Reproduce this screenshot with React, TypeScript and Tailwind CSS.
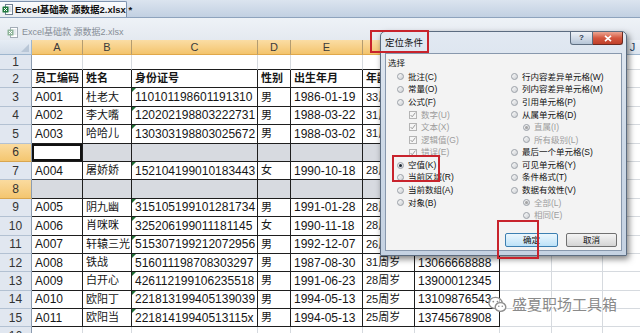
import React from 'react';

type Col = { id: string; w: string; table: boolean };

const COLS: Col[] = [
  { id: 'A', w: 'w-[51px]', table: true },
  { id: 'B', w: 'w-[49px]', table: true },
  { id: 'C', w: 'w-[126px]', table: true },
  { id: 'D', w: 'w-[33px]', table: true },
  { id: 'E', w: 'w-[72px]', table: true },
  { id: 'F', w: 'w-[52px]', table: true },
  { id: 'G', w: 'w-[85px]', table: true },
  { id: 'H', w: 'w-[52px]', table: false },
  { id: 'I', w: 'w-[51px]', table: false },
  { id: 'J', w: 'w-[60px]', table: false },
];

const DATA: (string[] | null)[] = [
  ['员工编码', '姓名', '身份证号', '性别', '出生年月', '年龄', '联系电话'],
  ['A001', '杜老大', '110101198601191310', '男', '1986-01-19', '33周岁', '13811112222'],
  ['A002', '李大嘴', '120202198803222731', '男', '1988-03-22', '31周岁', '13822223333'],
  ['A003', '哈哈儿', '130303198803025672', '男', '1988-03-02', '31周岁', '13833334444'],
  null,
  ['A004', '屠娇娇', '152104199010183443', '女', '1990-10-18', '28周岁', '13844445555'],
  null,
  ['A005', '阴九幽', '315105199101281734', '男', '1991-01-28', '28周岁', '13855556666'],
  ['A006', '肖咪咪', '325206199011181145', '女', '1990-11-18', '28周岁', '13866667777'],
  ['A007', '轩辕三光', '515307199212072956', '男', '1992-12-07', '26周岁', '13877778888'],
  ['A008', '铁战', '516011198708303297', '男', '1987-08-30', '31周岁', '13066668888'],
  ['A009', '白开心', '426112199106235518', '男', '1991-06-23', '28周岁', '13900012345'],
  ['A010', '欧阳丁', '221813199405139039', '男', '1994-05-13', '25周岁', '13109876543'],
  ['A011', '欧阳当', '22181419940513115x', '男', '1994-05-13', '25周岁', '13745678908'],
];

const CJK = /[\u4e00-\u9fff]/;

function ExcelIcon({ dim }: { dim?: boolean }) {
  return (
    <svg width="11" height="11" viewBox="0 0 11 11" className="shrink-0">
      <rect x="3.5" y="0.5" width="7" height="10" fill="#fff" stroke={dim ? '#a3acb6' : '#6f7f90'} />
      <path d="M5.5 3h4M5.5 5h4M5.5 7h4" stroke={dim ? '#c2ccd6' : '#93a7bb'} strokeWidth="0.8" />
      <rect x="0.5" y="2.5" width="6" height="6" rx="0.6" fill={dim ? '#8fb59a' : '#1f7a3d'} />
      <path d="M2 4l3 3M5 4l-3 3" stroke="#fff" strokeWidth="1" />
    </svg>
  );
}

function cellCls(col: Col, kind: string) {
  const base =
    'relative shrink-0 h-full border-r border-b flex items-center px-[3px] overflow-hidden whitespace-nowrap leading-none text-[#161616]';
  if (!col.table) return `${base} ${col.w} border-[#d6dadf]`;
  if (kind === 'top') return `${base} ${col.w} border-r-[#d6dadf] border-b-[#1e1e1e]`;
  if (kind === 'empty') return `${base} ${col.w} border-[#d6dadf]`;
  if (kind === 'blank') return `${base} ${col.w} border-[#1e1e1e] bg-[#d7dae0]`;
  return `${base} ${col.w} border-[#1e1e1e]`;
}

function SheetRow({
  n,
  kind,
  cells,
  bold,
  activeFirst,
  tall,
}: {
  n: number;
  kind: string;
  cells?: string[];
  bold?: boolean;
  activeFirst?: boolean;
  tall: boolean;
}) {
  const sel = kind === 'blank';
  return (
    <div className={tall ? 'flex h-[18.4px] shrink-0' : 'flex h-[15px] shrink-0'}>
      <div
        className={
          sel
            ? 'w-[32px] shrink-0 h-full border-r border-b border-r-[#8c9cb0] border-b-[#d9a64f] bg-linear-to-b from-[#fadb9f] to-[#f4c66f] flex items-center justify-center text-[12px] text-[#333] leading-none'
            : 'w-[32px] shrink-0 h-full border-r border-b border-r-[#8c9cb0] border-b-[#b3c1d2] bg-[#e1e7f0] flex items-center justify-center text-[12px] text-[#333] leading-none'
        }
      >
        {n}
      </div>
      {COLS.map((c, i) => {
        const t = cells && cells[i] ? cells[i] : '';
        const size = CJK.test(t) ? 'text-[11px]' : 'text-[12px]';
        const isActive = activeFirst && i === 0;
        return (
          <div
            key={c.id}
            className={
              cellCls(c, kind) +
              (isActive ? ' !bg-white shadow-[inset_0_0_0_2px_#111]' : '')
            }
          >
            {kind === 'data' && c.id === 'C' && !bold && (
              <span className="absolute left-0 top-0 w-0 h-0 border-t-[4px] border-r-[4px] border-t-[#1f6e34] border-r-transparent" />
            )}
            {t && <span className={`${size} ${bold ? 'font-bold' : ''}`}>{t}</span>}
          </div>
        );
      })}
    </div>
  );
}

function Radio({ on, disabled }: { on?: boolean; disabled?: boolean }) {
  return (
    <span className="w-[7px] h-[7px] shrink-0 rounded-full border border-[#9aa0a7] bg-linear-to-br from-[#fbfbfb] to-[#cdd0d4] flex items-center justify-center">
      {on && (
        <span
          className={
            disabled
              ? 'w-[3px] h-[3px] rounded-full bg-[#a3a3a3]'
              : 'w-[3px] h-[3px] rounded-full bg-[#1d2733]'
          }
        />
      )}
    </span>
  );
}

function Check() {
  return (
    <span className="w-[8px] h-[8px] shrink-0 border border-[#b4b4b4] bg-[#f5f5f5] flex items-center justify-center">
      <svg width="6" height="6" viewBox="0 0 6 6">
        <path d="M0.6 3l1.6 1.8 3.2-4.2" fill="none" stroke="#9c9c9c" strokeWidth="1" />
      </svg>
    </span>
  );
}

type It = { t: 'r' | 'c' | 's'; label: string; on?: boolean; dis?: boolean };

const LEFT: It[] = [
  { t: 'r', label: '批注(C)' },
  { t: 'r', label: '常量(O)' },
  { t: 'r', label: '公式(F)' },
  { t: 'c', label: '数字(U)', dis: true },
  { t: 'c', label: '文本(X)', dis: true },
  { t: 'c', label: '逻辑值(G)', dis: true },
  { t: 'c', label: '错误(E)', dis: true },
  { t: 'r', label: '空值(K)', on: true },
  { t: 'r', label: '当前区域(R)' },
  { t: 'r', label: '当前数组(A)' },
  { t: 'r', label: '对象(B)' },
];

const RIGHT: It[] = [
  { t: 'r', label: '行内容差异单元格(W)' },
  { t: 'r', label: '列内容差异单元格(M)' },
  { t: 'r', label: '引用单元格(P)' },
  { t: 'r', label: '从属单元格(D)' },
  { t: 's', label: '直属(I)', on: true, dis: true },
  { t: 's', label: '所有级别(L)', dis: true },
  { t: 'r', label: '最后一个单元格(S)' },
  { t: 'r', label: '可见单元格(Y)' },
  { t: 'r', label: '条件格式(T)' },
  { t: 'r', label: '数据有效性(V)' },
  { t: 's', label: '全部(L)', on: true, dis: true },
  { t: 's', label: '相同(E)', dis: true },
];

function Item({ it }: { it: It }) {
  const indent = it.t === 'r' ? '' : ' pl-[12px]';
  return (
    <div className={'flex items-center h-[12.6px] gap-[4.5px]' + indent}>
      {it.t === 'c' ? <Check /> : <Radio on={it.on} disabled={it.dis} />}
      <span
        className={
          it.dis
            ? 'text-[8.5px] leading-none text-[#9d9d9d] whitespace-nowrap'
            : 'text-[8.5px] leading-none text-[#111] whitespace-nowrap'
        }
      >
        {it.label}
      </span>
    </div>
  );
}

function Dialog() {
  return (
    <div className="absolute left-[380px] top-[31px] w-[247px] h-[225px] rounded-t-[5px] border border-[#5c6c80] bg-linear-to-b from-[#e2e9f2] via-[#cdd9e7] to-[#c5d2e2] shadow-[2px_3px_6px_rgba(0,0,0,0.5)] flex flex-col">
      <div className="h-[21px] shrink-0 flex items-start">
        <span className="ml-[4px] mt-[6px] text-[9.5px] leading-none text-[#111]">定位条件</span>
        <div className="ml-auto mr-[3px] flex">
          <div className="w-[23px] h-[13px] rounded-bl-[3px] border border-t-0 border-[#5d6d80] bg-linear-to-b from-[#eef2f7] to-[#b6c5d7] flex items-center justify-center text-[8px] leading-none font-bold text-[#2b3a4c]">
            ?
          </div>
          <div className="w-[30px] h-[13px] rounded-br-[3px] border border-l-0 border-t-0 border-[#6b2a20] bg-linear-to-b from-[#eba592] via-[#d4573f] to-[#c0402a] flex items-center justify-center">
            <svg width="8" height="7" viewBox="0 0 8 7">
              <path d="M1 0.8l6 5.4M7 0.8l-6 5.4" stroke="#fff" strokeWidth="1.6" />
            </svg>
          </div>
        </div>
      </div>
      <div className="flex-1 mx-[4px] mb-[4px] border border-[#8898ad] bg-[#f3f3f3] pl-[2px] pt-[3px] flex flex-col">
        <div className="h-[12px] flex items-center text-[8.5px] leading-none text-[#111]">选择</div>
        <div className="flex pl-[8.5px] mt-[1.7px]">
          <div className="w-[114px] flex flex-col">
            {LEFT.map((it, i) => (
              <Item key={i} it={it} />
            ))}
          </div>
          <div className="flex flex-col">
            {RIGHT.map((it, i) => (
              <Item key={i} it={it} />
            ))}
          </div>
        </div>
        <div className="flex justify-end gap-[8px] pr-[4px] mt-[11px]">
          <div className="w-[53px] h-[14px] rounded-[2px] border border-[#3c7fb1] bg-linear-to-b from-[#ecf7fd] to-[#bde2f8] flex items-center justify-center text-[8.5px] leading-none text-[#111]">
            确定
          </div>
          <div className="w-[51px] h-[14px] rounded-[2px] border border-[#707070] bg-linear-to-b from-[#f4f4f4] to-[#d4d4d4] flex items-center justify-center text-[8.5px] leading-none text-[#111]">
            取消
          </div>
        </div>
      </div>
    </div>
  );
}

export default function App() {
  return (
    <div className="relative w-[640px] h-[333px] overflow-hidden bg-white font-['Liberation_Sans','Noto_Sans_CJK_SC',sans-serif]">
      {/* tab bar */}
      <div className="h-[18px] flex items-end bg-linear-to-b from-[#dbe4ef] to-[#c2d0e2] border-b border-[#8ea3bd]">
        <div className="h-[16px] w-[127px] flex items-center gap-[2px] pl-[2px] bg-linear-to-b from-[#fbfcfd] to-[#e8ecf1] border-r border-t border-[#7e93ae] rounded-tr-[2px]">
          <ExcelIcon />
          <span className="text-[9.5px] leading-none font-bold text-[#111] whitespace-nowrap">Excel基础款 源数据2.xlsx *</span>
        </div>
      </div>
      {/* title bar */}
      <div className="h-[22px] flex items-center gap-[4px] pl-[7px] pt-[6px] bg-linear-to-b from-[#eef2f7] to-[#e4e9f0]">
        <ExcelIcon dim />
        <span className="text-[9px] leading-none text-[#868d96] whitespace-nowrap">Excel基础款 源数据2.xlsx</span>
      </div>
      {/* column headers */}
      <div className="flex h-[15px]">
        <div className="relative w-[32px] shrink-0 h-full border-r border-b border-[#9eb6ce] bg-linear-to-b from-[#e6edf5] to-[#d3dde9]">
          <svg width="8" height="8" viewBox="0 0 8 8" className="absolute right-[2px] bottom-[2px]">
            <path d="M8 0V8H0Z" fill="#b9c7d7" />
          </svg>
        </div>
        {COLS.map((c) => (
          <div
            key={c.id}
            className={
              c.table
                ? `${c.w} shrink-0 h-full border-r border-b border-r-[#b49c70] border-b-[#e0a84a] bg-linear-to-b from-[#fbdda4] to-[#f3c46c] flex items-center justify-center text-[11px] leading-none text-[#3b3b3b]`
                : `${c.w} shrink-0 h-full border-r border-b border-[#9eb6ce] bg-linear-to-b from-[#eef3f9] to-[#dce5f0] flex items-center justify-center text-[11px] leading-none text-[#27415f]`
            }
          >
            {c.id}
          </div>
        ))}
      </div>
      {/* rows */}
      <SheetRow n={1} kind="top" tall={false} />
      {DATA.map((r, i) => (
        <SheetRow
          key={i}
          n={i + 2}
          kind={r ? 'data' : 'blank'}
          cells={r || undefined}
          bold={i === 0}
          activeFirst={i === 4}
          tall
        />
      ))}
      <SheetRow n={16} kind="empty" tall />

      <Dialog />

      {/* red highlight boxes */}
      <div className="absolute left-[370px] top-[30px] w-[59px] h-[23px] border-2 border-[#c8232c]" />
      <div className="absolute left-[392px] top-[155px] w-[48px] h-[27px] border-2 border-[#c8232c]" />
      <div className="absolute left-[497px] top-[220px] w-[42px] h-[39px] border-2 border-[#c8232c]" />

      {/* watermark */}
      <div className="absolute left-[488px] top-[296px] flex items-center gap-[5px]">
        <svg width="19" height="17" viewBox="0 0 19 17">
          <ellipse cx="7.5" cy="7" rx="6.6" ry="5.6" fill="rgba(255,255,255,0.7)" stroke="#8e8e8e" strokeWidth="1.4" />
          <circle cx="5.3" cy="5.6" r="0.9" fill="#8e8e8e" />
          <circle cx="9.5" cy="5.6" r="0.9" fill="#8e8e8e" />
          <ellipse cx="12.5" cy="11" rx="5.3" ry="4.4" fill="#fff" stroke="#8e8e8e" strokeWidth="1.4" />
          <circle cx="10.8" cy="10.3" r="0.8" fill="#8e8e8e" />
          <circle cx="14.3" cy="10.3" r="0.8" fill="#8e8e8e" />
        </svg>
        <span className="text-[15px] leading-none text-[#8a8a8a] whitespace-nowrap [text-shadow:0_0_2px_#fff,0_0_2px_#fff]">
          盛夏职场工具箱
        </span>
      </div>
    </div>
  );
}
